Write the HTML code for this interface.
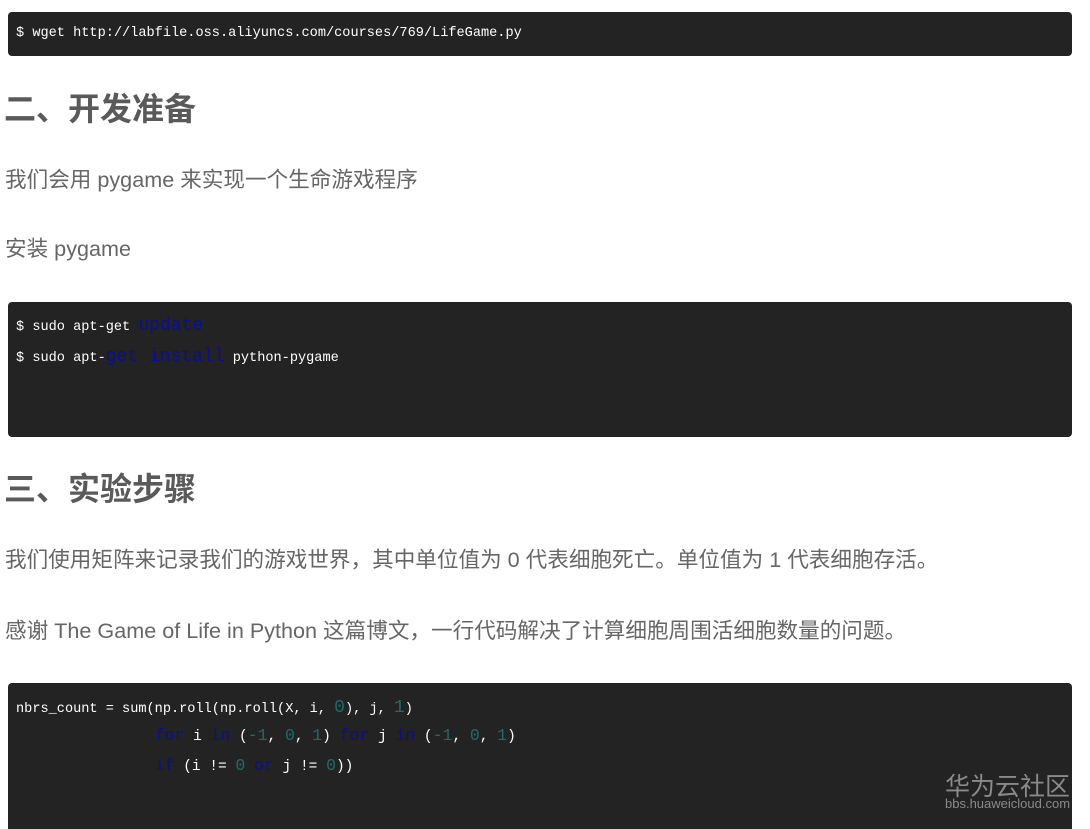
<!DOCTYPE html>
<html><head><meta charset="utf-8"><style>
html,body{margin:0;padding:0;background:#fff;width:1090px;height:829px;overflow:hidden;position:relative}
.code{position:absolute;left:8px;width:1064px;background:#232323;border-radius:4px;font-family:"Liberation Mono",monospace;font-size:13.6px;color:#fff;white-space:pre}
.code div{position:absolute;left:8px}
.k{color:#0a0f8f;font-size:18px}.n{color:#1f6b6b;font-size:18px}.b{font-size:14.5px}.b .k,.b .n{font-size:16.5px}
.t{position:absolute;left:5px;font-family:"Liberation Sans","Noto Sans CJK SC",sans-serif;color:#666;font-size:21.6px;white-space:nowrap;line-height:1}
.h{position:absolute;left:4px;font-family:"Liberation Sans","Noto Sans CJK SC",sans-serif;color:#5a5a5a;font-size:32px;font-weight:bold;white-space:nowrap;line-height:1}
</style></head><body>
<div class="code" style="top:12px;height:44px"><div style="top:14px">$ wget http://labfile.oss.aliyuncs.com/courses/769/LifeGame.py</div></div>
<div class="h" style="top:93px">二、开发准备</div>
<div class="t" style="top:169px">我们会用 pygame 来实现一个生命游戏程序</div>
<div class="t" style="top:238px">安装 pygame</div>
<div class="code" style="top:302px;height:135px">
<div style="top:14px">$ sudo apt-get <span class="k">update</span></div>
<div style="top:45px">$ sudo apt-<span class="k">get install</span> python-pygame</div></div>
<div class="h" style="top:473px">三、实验步骤</div>
<div class="t" style="top:549px">我们使用矩阵来记录我们的游戏世界，其中单位值为 0 代表细胞死亡。单位值为 1 代表细胞存活。</div>
<div class="t" style="top:620px">感谢 The Game of Life in Python 这篇博文，一行代码解决了计算细胞周围活细胞数量的问题。</div>
<div class="code" style="top:683px;height:160px">
<div style="top:15px">nbrs_count = sum(np.roll(np.roll(X, i, <span class="n">0</span>), j, <span class="n">1</span>)</div>
<div style="top:43px">                 <span class="b"><span class="k">for</span> i <span class="k">in</span> (<span class="n">-1</span>, <span class="n">0</span>, <span class="n">1</span>) <span class="k">for</span> j <span class="k">in</span> (<span class="n">-1</span>, <span class="n">0</span>, <span class="n">1</span>)</span></div>
<div style="top:73px">                 <span class="b"><span class="k">if</span> (i != <span class="n">0</span> <span class="k">or</span> j != <span class="n">0</span>))</span></div>
<div style="top:84px;left:937px;font-family:'Liberation Sans','Noto Sans CJK SC',sans-serif;font-size:25px;color:#8a8a8a">华为云社区</div>
<div style="top:113px;left:937px;font-family:'Liberation Sans',sans-serif;font-size:13px;color:#8a8a8a">bbs.huaweicloud.com</div>
</div>
</body></html>
